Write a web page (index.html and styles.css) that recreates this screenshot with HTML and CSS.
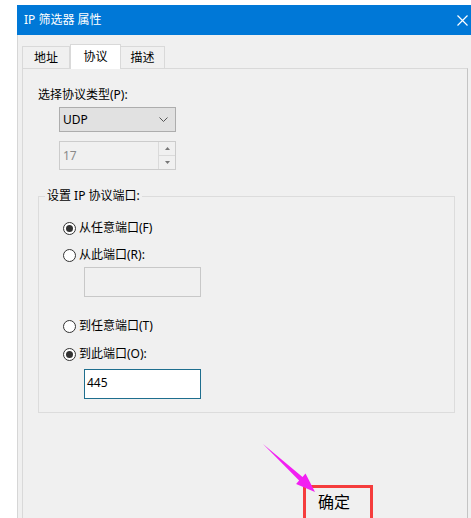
FILE: index.html
```html
<!DOCTYPE html>
<html lang="zh-CN">

<head>
    <meta charset="UTF-8">
    <meta name="viewport" content="width=device-width, initial-scale=1.0">
    <title>IP 筛选器 属性</title>
    <link rel="stylesheet" href="styles.css">
</head>

<body>
    <div class="window">
        <!-- 标题栏 -->
        <div class="titlebar">
            <span class="title">IP 筛选器 属性</span>
            <svg class="close" width="11" height="11" viewBox="0 0 11 11">
                <path d="M0.5 0.5 L10.5 10.5 M10.5 0.5 L0.5 10.5" stroke="#fff" stroke-width="1.2" fill="none" />
            </svg>
        </div>

        <div class="window-body">
            <div class="tabs">
                <div class="tab tab-first">地址</div>
                <div class="tab tab-active">协议</div>
                <div class="tab tab-last">描述</div>
            </div>

            <div class="panel">
                <div class="field-label">选择协议类型(P):</div>
                <div class="select">
                    <span>UDP</span>
                    <svg width="9" height="5" viewBox="0 0 9 5">
                        <path d="M0.5 0.5 L4.5 4.5 L8.5 0.5" stroke="#555" stroke-width="1" fill="none" />
                    </svg>
                </div>
                <div class="spin">
                    <span class="spin-value">17</span>
                    <div class="spin-buttons">
                        <div class="spin-btn">
                            <svg width="5" height="3" viewBox="0 0 5 3"><path d="M0 3 L2.5 0 L5 3 Z" fill="#777" /></svg>
                        </div>
                        <div class="spin-btn spin-down">
                            <svg width="5" height="3" viewBox="0 0 5 3"><path d="M0 0 L2.5 3 L5 0 Z" fill="#777" /></svg>
                        </div>
                    </div>
                </div>

                <fieldset class="group">
                    <legend>设置 IP 协议端口:</legend>
                    <div class="group-body">
                        <div class="radio-row row-1"><span class="radio checked"></span>从任意端口(F)</div>
                        <div class="radio-row row-2"><span class="radio"></span>从此端口(R):</div>
                        <div class="textbox textbox-from"></div>
                        <div class="radio-row row-3"><span class="radio"></span>到任意端口(T)</div>
                        <div class="radio-row row-4"><span class="radio checked"></span>到此端口(O):</div>
                        <div class="textbox textbox-active">445</div>
                    </div>
                </fieldset>

                <div class="ok-button">确定</div>
            </div>
        </div>
    </div>

    <!-- 标注箭头 -->
    <svg class="arrow" width="471" height="518" viewBox="0 0 471 518">
        <polygon points="263,444 302.5,477 305.5,473.6 315,492 296.1,484 299.1,480.6" fill="#f21ff2" />
    </svg>
</body>

</html>
```

FILE: styles.css
```css
html,
body {
    margin: 0;
    height: 518px;
    overflow: hidden;
}

body {
    position: relative;
    background: #fff;
    font-family: "Noto Sans", "Noto Sans CJK SC", sans-serif;
    font-size: 12px;
    line-height: 16px;
    color: #000;
}

.window {
    margin: 5px 0 0 17px;
    height: 513px;
    display: flex;
    flex-direction: column;
    background: #f0f0f0;
}

.titlebar {
    height: 30px;
    flex-shrink: 0;
    display: flex;
    align-items: center;
    justify-content: space-between;
    padding: 0 3px 0 7px;
    background: #0078d7;
    color: #fff;
}

.close {
    display: block;
}

.window-body {
    flex: 1;
    display: flex;
    flex-direction: column;
    border-left: 1px solid #d6d6d6;
    padding: 9px 3px 0 4px;
}

.tabs {
    height: 24px;
    display: flex;
    align-items: flex-end;
    flex-shrink: 0;
}

.tab {
    box-sizing: border-box;
    height: 22px;
    line-height: 22px;
    text-align: center;
    border: 1px solid #d9d9d9;
    border-bottom: none;
    background: #f0f0f0;
}

.tab-first {
    width: 48px;
}

.tab-active {
    position: relative;
    z-index: 1;
    width: 51px;
    height: 25px;
    line-height: 23px;
    margin-bottom: -1px;
    background: #fff;
}

.tab-last {
    width: 44px;
    border-left: none;
}

.panel {
    flex: 1;
    border: 1px solid #d9d9d9;
    border-right-color: #c4c4c4;
    border-bottom: none;
    padding: 18px 0 0 15px;
    background: #f0f0f0;
}

.select {
    box-sizing: border-box;
    width: 117px;
    height: 25px;
    margin: 4px 0 0 21px;
    padding: 0 7px 0 3px;
    display: flex;
    align-items: center;
    justify-content: space-between;
    background: #e1e1e1;
    border: 1px solid #adadad;
}

.select svg {
    display: block;
}

.spin {
    box-sizing: border-box;
    width: 117px;
    height: 29px;
    margin: 9px 0 0 21px;
    display: flex;
    border: 1px solid #cccccc;
    background: #f0f0f0;
}

.spin-value {
    flex: 1;
    padding-left: 3px;
    line-height: 27px;
    color: #8a8a8a;
}

.spin-buttons {
    width: 16px;
    display: flex;
    flex-direction: column;
    border-left: 1px solid #dadada;
}

.spin-btn {
    flex: 1;
    display: flex;
    align-items: center;
    justify-content: center;
}

.spin-btn svg {
    display: block;
}

.spin-down {
    border-top: 1px solid #dadada;
}

.group {
    box-sizing: border-box;
    width: 417px;
    margin: 18px 0 0 0;
    padding: 0 0 13px 0;
    min-width: 0;
    border: 1px solid #dcdcdc;
}

.group legend {
    margin-left: 6px;
    padding: 0 2px;
    line-height: 16px;
}

.group-body {
    padding-left: 24px;
}

.radio-row {
    height: 16px;
    display: flex;
    align-items: center;
    gap: 3px;
}

.radio {
    box-sizing: border-box;
    width: 13px;
    height: 13px;
    border: 1px solid #333;
    border-radius: 50%;
    background: #fff;
    display: flex;
    align-items: center;
    justify-content: center;
}

.radio.checked::after {
    content: "";
    width: 7px;
    height: 7px;
    border-radius: 50%;
    background: #333;
}

.row-1 {
    margin-top: 16px;
}

.row-2 {
    margin-top: 11px;
}

.row-3 {
    margin-top: 21px;
}

.row-4 {
    margin-top: 12px;
}

.textbox {
    box-sizing: border-box;
    width: 117px;
    height: 30px;
    margin: 4px 0 0 21px;
    padding-left: 2px;
    line-height: 26px;
    border: 1px solid #c8c8c8;
    background: #f0f0f0;
}

.textbox-active {
    margin-top: 7px;
    background: #fff;
    border-color: #1e6e8e;
}

.ok-button {
    box-sizing: border-box;
    width: 70px;
    height: 36px;
    margin: 72px 0 0 265px;
    padding: 4px 0 0 12px;
    border: 3px solid #f53d3d;
    font-size: 16px;
    line-height: 20px;
}

.arrow {
    position: absolute;
    top: 0;
    left: 0;
    pointer-events: none;
}
```
